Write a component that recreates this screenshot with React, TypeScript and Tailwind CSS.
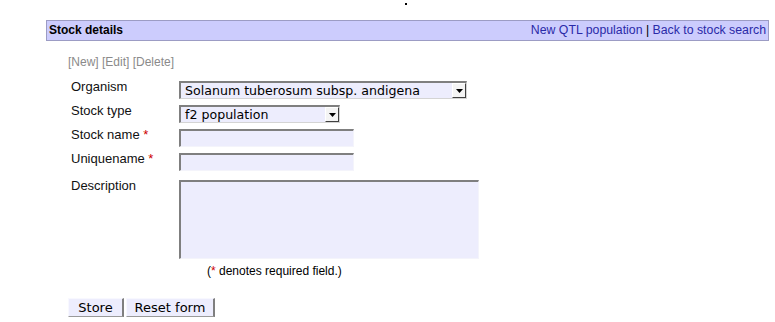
import React from "react";

const sans = { fontFamily: '"Liberation Sans", Arial, sans-serif' };
const dejavu = { fontFamily: '"DejaVu Sans", Verdana, sans-serif' };

const SelectBox = ({ value, width }: { value: string; width: string }) => (
  <div
    className={`${width} h-[18px] flex items-stretch bg-[#ededfd] border-t-2 border-l-2 border-[#7f7f7f] border-r border-b border-r-[#d4d4d4] border-b-[#d4d4d4]`}
  >
    <span className="flex-1 pl-[4px] text-[12.6px] leading-[15px] text-black" style={dejavu}>
      {value}
    </span>
    <span className="w-[14px] flex items-center justify-center bg-[#f4f4f4] border-t border-l border-t-white border-l-white border-r border-b border-r-[#404040] border-b-[#404040]">
      <svg width="7" height="4" viewBox="0 0 7 4">
        <path d="M0 0h7L3.5 4z" fill="#000" />
      </svg>
    </span>
  </div>
);

const TextBox = ({ width, height }: { width: string; height: string }) => (
  <div
    className={`${width} ${height} bg-[#ededfd] border-t-2 border-l-2 border-[#7f7f7f] border-r border-b border-r-[#f4f4fb] border-b-[#f4f4fb]`}
  />
);

const Req = () => <span className="text-[#cc0000]"> *</span>;

const Row = ({ label, children }: { label: React.ReactNode; children: React.ReactNode }) => (
  <div className="flex items-start">
    <div className="w-[108px] text-[13px] leading-[16px] -mt-[2px] text-[#111]">{label}</div>
    {children}
  </div>
);

export default function App() {
  return (
    <div className="w-[775px] h-[322px] bg-white overflow-hidden" style={sans}>
      <div className="ml-[405px] mt-[3px] w-[2px] h-[2px] bg-black" />

      <div className="ml-[46px] mt-[15px] w-[723px] h-[21px] bg-[#ccccfd] border border-[#9c9cc4] flex items-start justify-between px-[2px] pt-[1px] text-[12px] leading-[16px]">
        <span className="font-bold text-black">Stock details</span>
        <span className="text-black text-[12.3px]">
          <a className="text-[#2a2aa8]">New QTL population</a> |{" "}
          <a className="text-[#2a2aa8]">Back to stock search</a>
        </span>
      </div>

      <div className="ml-[68px] mt-[14px] text-[12px] leading-[14px] text-[#8a8a8a]">[New] [Edit] [Delete]</div>

      <div className="ml-[71px] mt-[12px] flex flex-col gap-[6px]">
        <Row label="Organism">
          <SelectBox value="Solanum tuberosum subsp. andigena" width="w-[288px]" />
        </Row>
        <Row label="Stock type">
          <SelectBox value="f2 population" width="w-[161px]" />
        </Row>
        <Row label={<>Stock name<Req /></>}>
          <TextBox width="w-[175px]" height="h-[18px]" />
        </Row>
        <Row label={<>Uniquename<Req /></>}>
          <TextBox width="w-[175px]" height="h-[18px]" />
        </Row>
        <div className="mt-[3px]">
          <Row label="Description">
            <TextBox width="w-[300px]" height="h-[79px]" />
          </Row>
        </div>
      </div>

      <div className="ml-[207px] mt-[5px] text-[12px] leading-[14px] text-black">
        (<span className="text-[#cc0000]">*</span> denotes required field.)
      </div>

      <div className="ml-[68px] mt-[20px] flex gap-[2px]" style={dejavu}>
        <button className="w-[56px] h-[19px] bg-[#ededfd] border-t border-l border-t-[#f8f8ff] border-l-[#f8f8ff] border-r-2 border-b border-r-[#7f7f7f] border-b-[#9a9a9a] text-[13px] leading-[16px] text-black">
          Store
        </button>
        <button className="w-[89px] h-[19px] bg-[#ededfd] border-t border-l border-t-[#f8f8ff] border-l-[#f8f8ff] border-r-2 border-b border-r-[#7f7f7f] border-b-[#9a9a9a] text-[13px] leading-[16px] text-black">
          Reset form
        </button>
      </div>
    </div>
  );
}
